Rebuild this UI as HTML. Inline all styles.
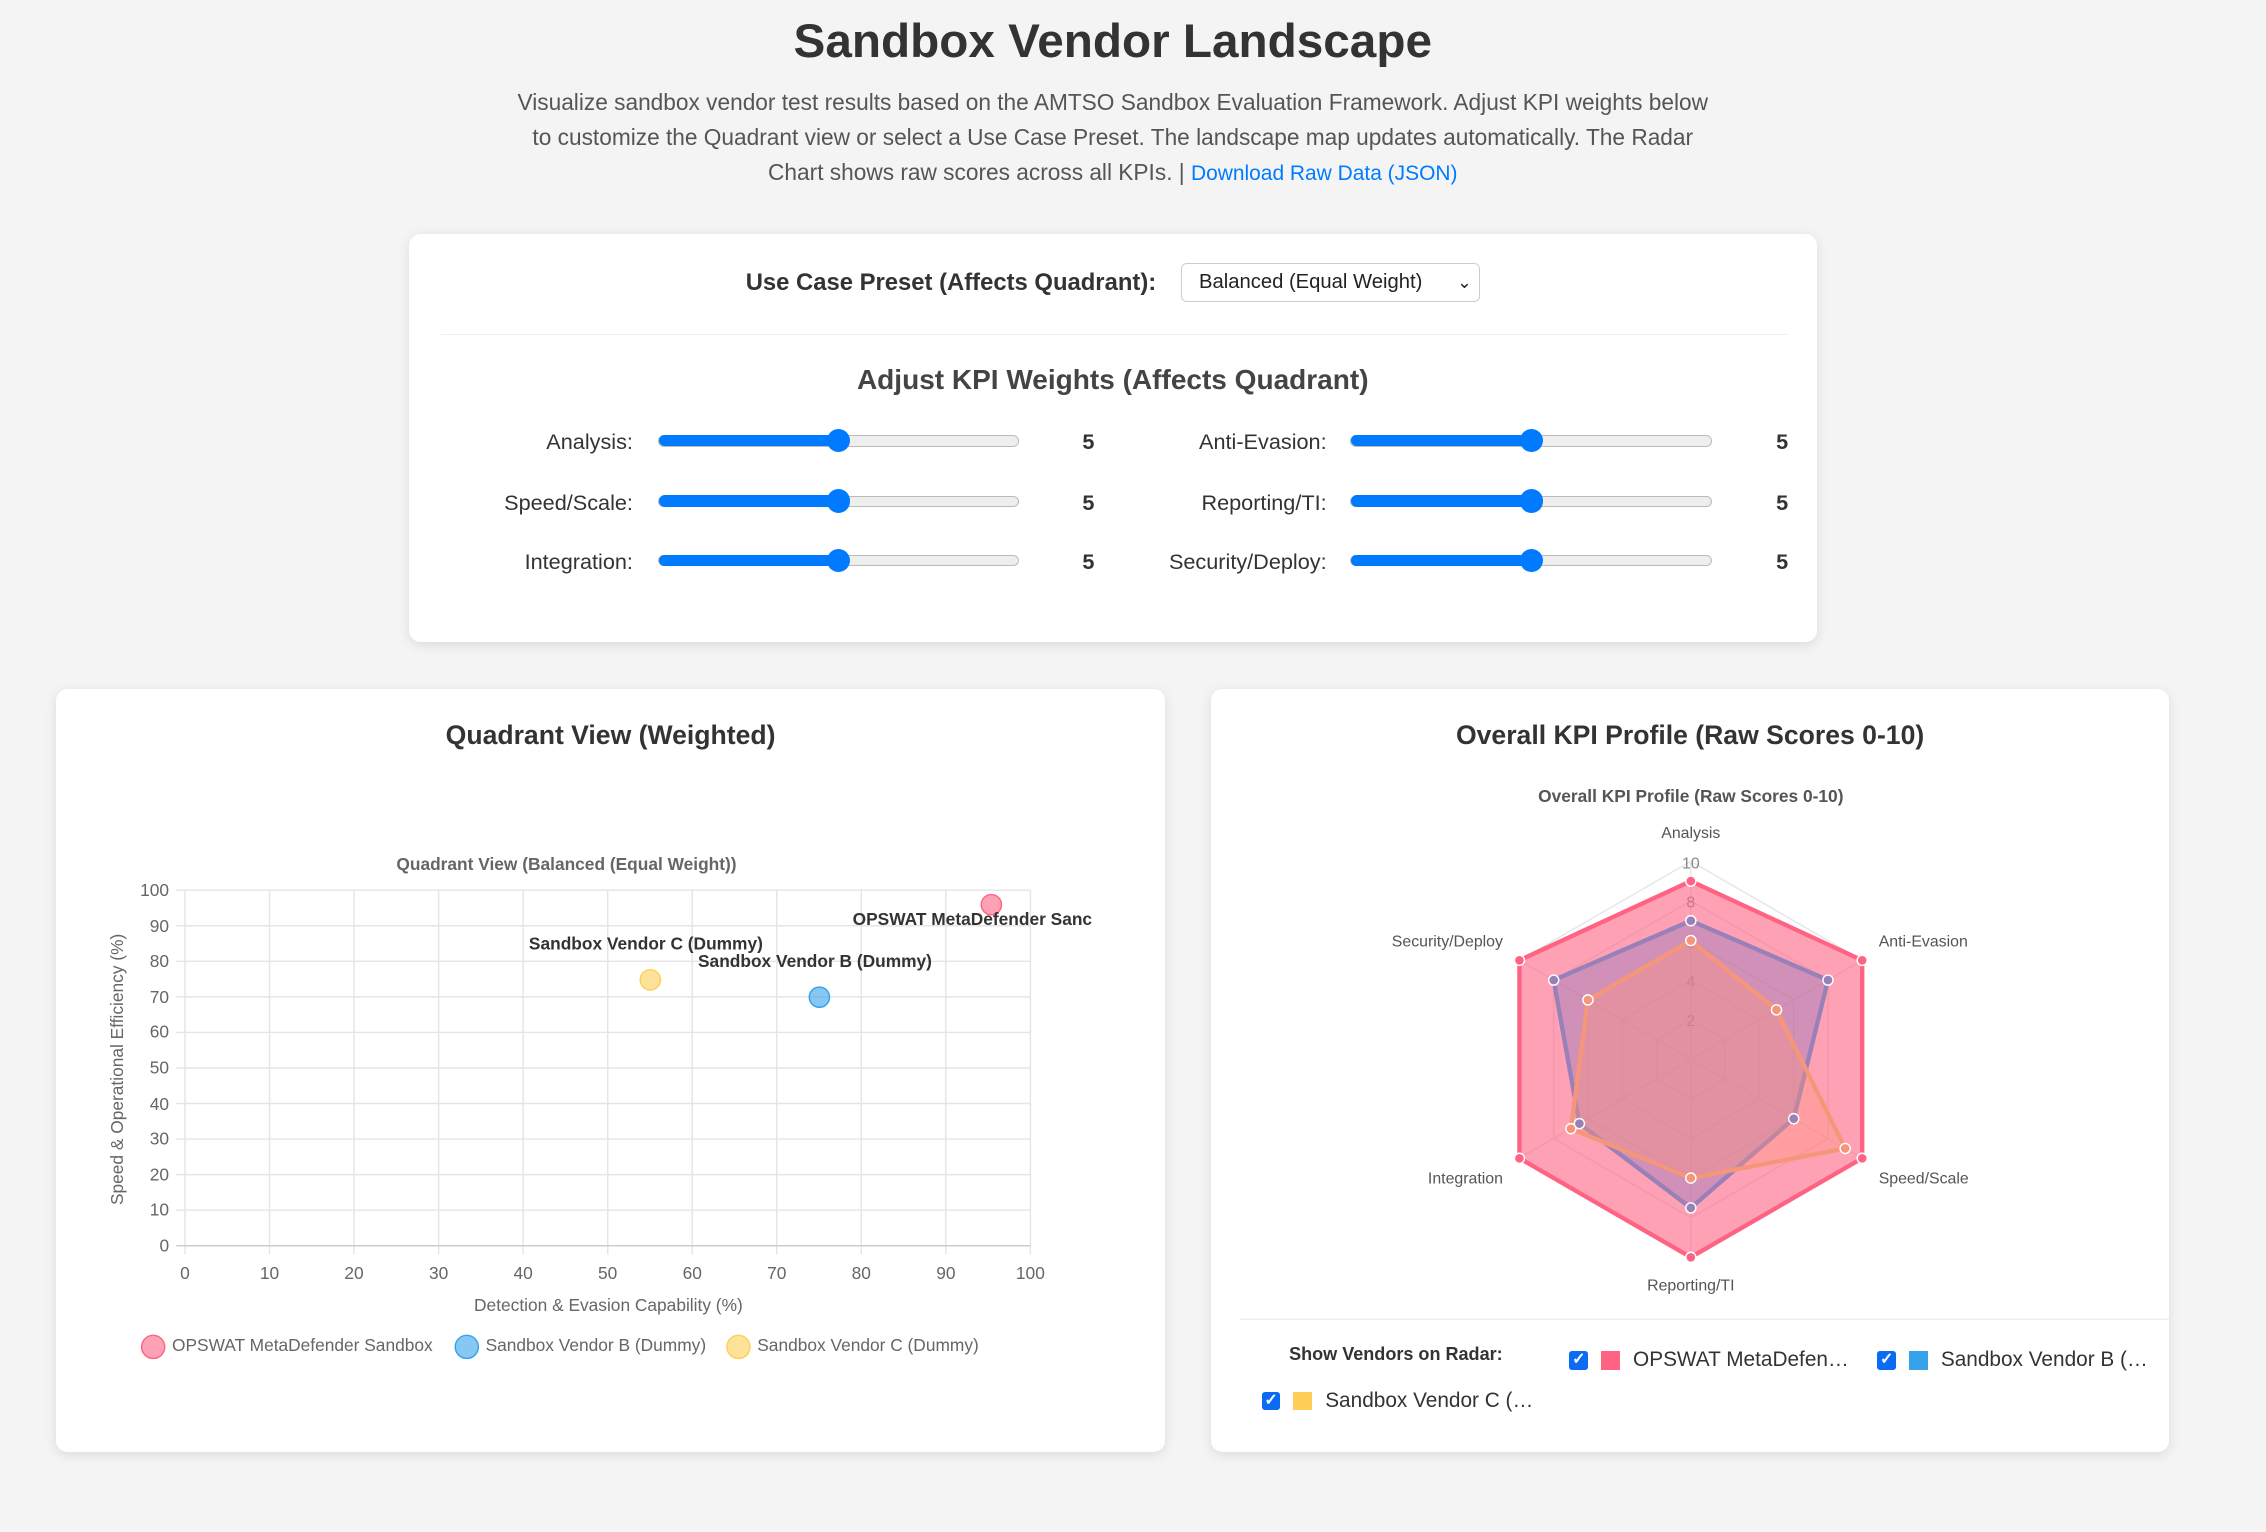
<!DOCTYPE html>
<html><head><meta charset="utf-8"><style>
html,body{margin:0;padding:0}
body{background:#f4f4f4;width:1568px;height:1060px;zoom:1.44515;font-family:"Liberation Sans",Arial,sans-serif;position:relative;overflow:hidden;color:#333}
.a{position:absolute}
.card{position:absolute;background:#fff;border-radius:8px;box-shadow:0 2px 8px rgba(0,0,0,.1)}
h1{position:absolute;left:0;width:1540px;top:10px;margin:0;text-align:center;font-size:33px;font-weight:bold;color:#333}
.p{left:350px;width:840px;top:59px;text-align:center;font-size:15.7px;line-height:24px;color:#555}
.lbl{font-size:15px;color:#333;text-align:right;width:200px}
.val{font-size:15px;font-weight:bold;color:#333}
.sl{position:absolute;height:8px;border-radius:4px;background:#eee;border:1px solid #bbb;box-sizing:border-box}
.sl i{position:absolute;left:0;top:-1px;height:8px;width:50%;background:#007bff;border-radius:4px}
.sl b{position:absolute;left:50%;margin-left:-8px;top:-5px;width:16px;height:16px;border-radius:50%;background:#007bff}
.ct{font-size:18.4px;font-weight:bold;color:#333;text-align:center}
.cb{position:absolute;width:13px;height:13px;background:#0b6bf2;border-radius:2px;color:#fff;font-size:11px;line-height:13px;text-align:center;font-weight:bold}
.sw{position:absolute;width:13px;height:13px}
.vt{position:absolute;font-size:14.4px;color:#333;white-space:nowrap}
</style></head><body>
<h1>Sandbox Vendor Landscape</h1>
<div class="a p">Visualize sandbox vendor test results based on the AMTSO Sandbox Evaluation Framework. Adjust KPI weights below to customize the Quadrant view or select a Use Case Preset. The landscape map updates automatically. The Radar Chart shows raw scores across all KPIs. | <span style="color:#007bff;font-size:14.5px">Download Raw Data (JSON)</span></div>

<div class="card" style="left:283px;top:162px;width:974px;height:282px"></div>
<div class="a" style="left:516px;top:186px;font-size:16.5px;font-weight:bold;color:#333">Use Case Preset (Affects Quadrant):</div>
<div class="a" style="left:817px;top:182px;width:207px;height:27px;border:1px solid #ccc;border-radius:4px;background:#fff;box-sizing:border-box;font-size:14px;line-height:25px;padding-left:12px;color:#222">Balanced (Equal Weight)<span style="position:absolute;right:5px;top:0;font-size:12px">&#8964;</span></div>
<div class="a" style="left:305px;top:231px;width:932px;height:1px;background:#eee"></div>
<div class="a" style="left:283px;width:974px;top:252px;text-align:center;font-size:19.4px;font-weight:bold;color:#444">Adjust KPI Weights (Affects Quadrant)</div>

<div class="a lbl" style="left:238px;top:297px">Analysis:</div><div class="sl" style="left:455px;top:301px;width:250px"><i></i><b></b></div><div class="a val" style="left:749px;top:297px">5</div>
<div class="a lbl" style="left:238px;top:339px">Speed/Scale:</div><div class="sl" style="left:455px;top:343px;width:250px"><i></i><b></b></div><div class="a val" style="left:749px;top:339px">5</div>
<div class="a lbl" style="left:238px;top:380px">Integration:</div><div class="sl" style="left:455px;top:384px;width:250px"><i></i><b></b></div><div class="a val" style="left:749px;top:380px">5</div>
<div class="a lbl" style="left:718px;top:297px">Anti-Evasion:</div><div class="sl" style="left:934px;top:301px;width:251px"><i></i><b></b></div><div class="a val" style="left:1229px;top:297px">5</div>
<div class="a lbl" style="left:718px;top:339px">Reporting/TI:</div><div class="sl" style="left:934px;top:343px;width:251px"><i></i><b></b></div><div class="a val" style="left:1229px;top:339px">5</div>
<div class="a lbl" style="left:718px;top:380px">Security/Deploy:</div><div class="sl" style="left:934px;top:384px;width:251px"><i></i><b></b></div><div class="a val" style="left:1229px;top:380px">5</div>

<div class="card" style="left:39px;top:477px;width:767px;height:528px"></div>
<div class="card" style="left:838px;top:477px;width:663px;height:528px"></div>
<div class="a ct" style="left:39px;width:767px;top:498px">Quadrant View (Weighted)</div>
<div class="a ct" style="left:838px;width:663px;top:498px">Overall KPI Profile (Raw Scores 0-10)</div>

<svg class="a" style="left:0;top:0" width="1568" height="1060" font-family="Liberation Sans, Arial, sans-serif">
<g stroke="#e5e5e5" stroke-width="1">
<line x1="128" y1="616" x2="128" y2="868"/><line x1="186.5" y1="616" x2="186.5" y2="868"/><line x1="245" y1="616" x2="245" y2="868"/><line x1="303.5" y1="616" x2="303.5" y2="868"/><line x1="362" y1="616" x2="362" y2="868"/><line x1="420.5" y1="616" x2="420.5" y2="868"/><line x1="479" y1="616" x2="479" y2="868"/><line x1="537.5" y1="616" x2="537.5" y2="868"/><line x1="596" y1="616" x2="596" y2="868"/><line x1="654.5" y1="616" x2="654.5" y2="868"/><line x1="713" y1="616" x2="713" y2="868"/>
<line x1="122" y1="616" x2="713" y2="616"/><line x1="122" y1="640.6" x2="713" y2="640.6"/><line x1="122" y1="665.2" x2="713" y2="665.2"/><line x1="122" y1="689.8" x2="713" y2="689.8"/><line x1="122" y1="714.4" x2="713" y2="714.4"/><line x1="122" y1="739" x2="713" y2="739"/><line x1="122" y1="763.6" x2="713" y2="763.6"/><line x1="122" y1="788.2" x2="713" y2="788.2"/><line x1="122" y1="812.8" x2="713" y2="812.8"/><line x1="122" y1="837.4" x2="713" y2="837.4"/>
</g>
<line x1="122" y1="862" x2="713" y2="862" stroke="#ccc"/>
<g font-size="12" fill="#666" text-anchor="end">
<text x="117" y="620">100</text><text x="117" y="645">90</text><text x="117" y="669">80</text><text x="117" y="694">70</text><text x="117" y="718">60</text><text x="117" y="743">50</text><text x="117" y="768">40</text><text x="117" y="792">30</text><text x="117" y="817">20</text><text x="117" y="841">10</text><text x="117" y="866">0</text>
</g>
<g font-size="12" fill="#666" text-anchor="middle">
<text x="128" y="885">0</text><text x="186.5" y="885">10</text><text x="245" y="885">20</text><text x="303.5" y="885">30</text><text x="362" y="885">40</text><text x="420.5" y="885">50</text><text x="479" y="885">60</text><text x="537.5" y="885">70</text><text x="596" y="885">80</text><text x="654.5" y="885">90</text><text x="713" y="885">100</text>
<text x="421" y="907" font-size="12">Detection &amp; Evasion Capability (%)</text>
<text x="392" y="602" font-size="12" font-weight="bold">Quadrant View (Balanced (Equal Weight))</text>
</g>
<text transform="translate(85,740) rotate(-90)" font-size="12" fill="#666" text-anchor="middle">Speed &amp; Operational Efficiency (%)</text>
<circle cx="686" cy="626" r="7" fill="rgba(255,99,132,.6)" stroke="#ff6384"/>
<circle cx="567" cy="690" r="7" fill="rgba(54,162,235,.6)" stroke="#36a2eb"/>
<circle cx="450" cy="678" r="7" fill="rgba(255,206,86,.6)" stroke="#ffce56"/>
<g font-size="12" font-weight="bold" fill="#333">
<text x="590" y="640">OPSWAT MetaDefender Sanc</text>
<text x="366" y="657">Sandbox Vendor C (Dummy)</text>
<text x="483" y="669">Sandbox Vendor B (Dummy)</text>
</g>
<g font-size="12" fill="#666">
<circle cx="106" cy="932" r="8" fill="rgba(255,99,132,.6)" stroke="#ff6384"/><text x="119" y="935">OPSWAT MetaDefender Sandbox</text>
<circle cx="323" cy="932" r="8" fill="rgba(54,162,235,.6)" stroke="#36a2eb"/><text x="336" y="935">Sandbox Vendor B (Dummy)</text>
<circle cx="511" cy="932" r="8" fill="rgba(255,206,86,.6)" stroke="#ffce56"/><text x="524" y="935">Sandbox Vendor C (Dummy)</text>
</g>

<g fill="none" stroke="#e6e6e6" stroke-width="1">
<polygon points="1170,596 1288.6,664.5 1288.6,801.5 1170,870 1051.4,801.5 1051.4,664.5"/>
<polygon points="1170,623.4 1264.9,678.2 1264.9,787.8 1170,842.6 1075.1,787.8 1075.1,678.2"/>
<polygon points="1170,650.8 1241.2,691.9 1241.2,774.1 1170,815.2 1098.8,774.1 1098.8,691.9"/>
<polygon points="1170,678.2 1217.5,705.6 1217.5,760.4 1170,787.8 1122.5,760.4 1122.5,705.6"/>
<polygon points="1170,705.6 1193.7,719.3 1193.7,746.7 1170,760.4 1146.3,746.7 1146.3,719.3"/>
<line x1="1170" y1="733" x2="1170" y2="596"/><line x1="1170" y1="733" x2="1288.6" y2="664.5"/><line x1="1170" y1="733" x2="1288.6" y2="801.5"/><line x1="1170" y1="733" x2="1170" y2="870"/><line x1="1170" y1="733" x2="1051.4" y2="801.5"/><line x1="1170" y1="733" x2="1051.4" y2="664.5"/>
</g>
<g font-size="11" fill="#888" text-anchor="middle">
<text x="1170" y="601">10</text><text x="1170" y="628">8</text><text x="1170" y="656">6</text><text x="1170" y="683">4</text><text x="1170" y="710">2</text>
</g>
<polygon points="1170,609.7 1288.6,664.5 1288.6,801.5 1170,870 1051.4,801.5 1051.4,664.5" fill="rgba(255,99,132,.6)" stroke="#ff6384" stroke-width="3" stroke-linejoin="round"/>
<polygon points="1170,637.1 1264.9,678.2 1241.2,774.1 1170,835.8 1092.9,777.5 1075.1,678.2" fill="rgba(140,120,190,.4)" stroke="#9a80b8" stroke-width="3" stroke-linejoin="round"/>
<polygon points="1170,650.8 1229.3,698.8 1276.8,794.7 1170,815.2 1087,781 1098.8,691.9" fill="rgba(255,150,120,.35)" stroke="#f5967a" stroke-width="3" stroke-linejoin="round"/>
<g fill="#ff6384" stroke="#fff" stroke-width="1">
<circle cx="1170" cy="609.7" r="3.5"/><circle cx="1288.6" cy="664.5" r="3.5"/><circle cx="1288.6" cy="801.5" r="3.5"/><circle cx="1170" cy="870" r="3.5"/><circle cx="1051.4" cy="801.5" r="3.5"/><circle cx="1051.4" cy="664.5" r="3.5"/>
</g>
<g fill="#9a80b8" stroke="#fff" stroke-width="1">
<circle cx="1170" cy="637.1" r="3.5"/><circle cx="1264.9" cy="678.2" r="3.5"/><circle cx="1241.2" cy="774.1" r="3.5"/><circle cx="1170" cy="835.8" r="3.5"/><circle cx="1092.9" cy="777.5" r="3.5"/><circle cx="1075.1" cy="678.2" r="3.5"/>
</g>
<g fill="#f5967a" stroke="#fff" stroke-width="1">
<circle cx="1170" cy="650.8" r="3.5"/><circle cx="1229.3" cy="698.8" r="3.5"/><circle cx="1276.8" cy="794.7" r="3.5"/><circle cx="1170" cy="815.2" r="3.5"/><circle cx="1087" cy="781" r="3.5"/><circle cx="1098.8" cy="691.9" r="3.5"/>
</g>
<g font-size="11" fill="#555">
<text x="1170" y="555" text-anchor="middle" font-weight="bold" font-size="12">Overall KPI Profile (Raw Scores 0-10)</text>
<text x="1170" y="580" text-anchor="middle">Analysis</text>
<text x="1300" y="655">Anti-Evasion</text>
<text x="1300" y="819">Speed/Scale</text>
<text x="1170" y="893" text-anchor="middle">Reporting/TI</text>
<text x="1040" y="819" text-anchor="end">Integration</text>
<text x="1040" y="655" text-anchor="end">Security/Deploy</text>
</g>
<line x1="858" y1="913" x2="1501" y2="913" stroke="#eee"/>
</svg>

<div class="a" style="left:892px;top:930px;font-size:12.5px;font-weight:bold;color:#333">Show Vendors on Radar:</div>
<div class="cb" style="left:1086px;top:935px">&#10003;</div><div class="sw" style="left:1108px;top:935px;background:#ff6384"></div><div class="vt" style="left:1130px;top:933px">OPSWAT MetaDefen…</div>
<div class="cb" style="left:1299px;top:935px">&#10003;</div><div class="sw" style="left:1321px;top:935px;background:#36a2eb"></div><div class="vt" style="left:1343px;top:933px">Sandbox Vendor B (…</div>
<div class="cb" style="left:873px;top:963px">&#10003;</div><div class="sw" style="left:895px;top:963px;background:#ffce56"></div><div class="vt" style="left:917px;top:961px">Sandbox Vendor C (…</div>
</body></html>
